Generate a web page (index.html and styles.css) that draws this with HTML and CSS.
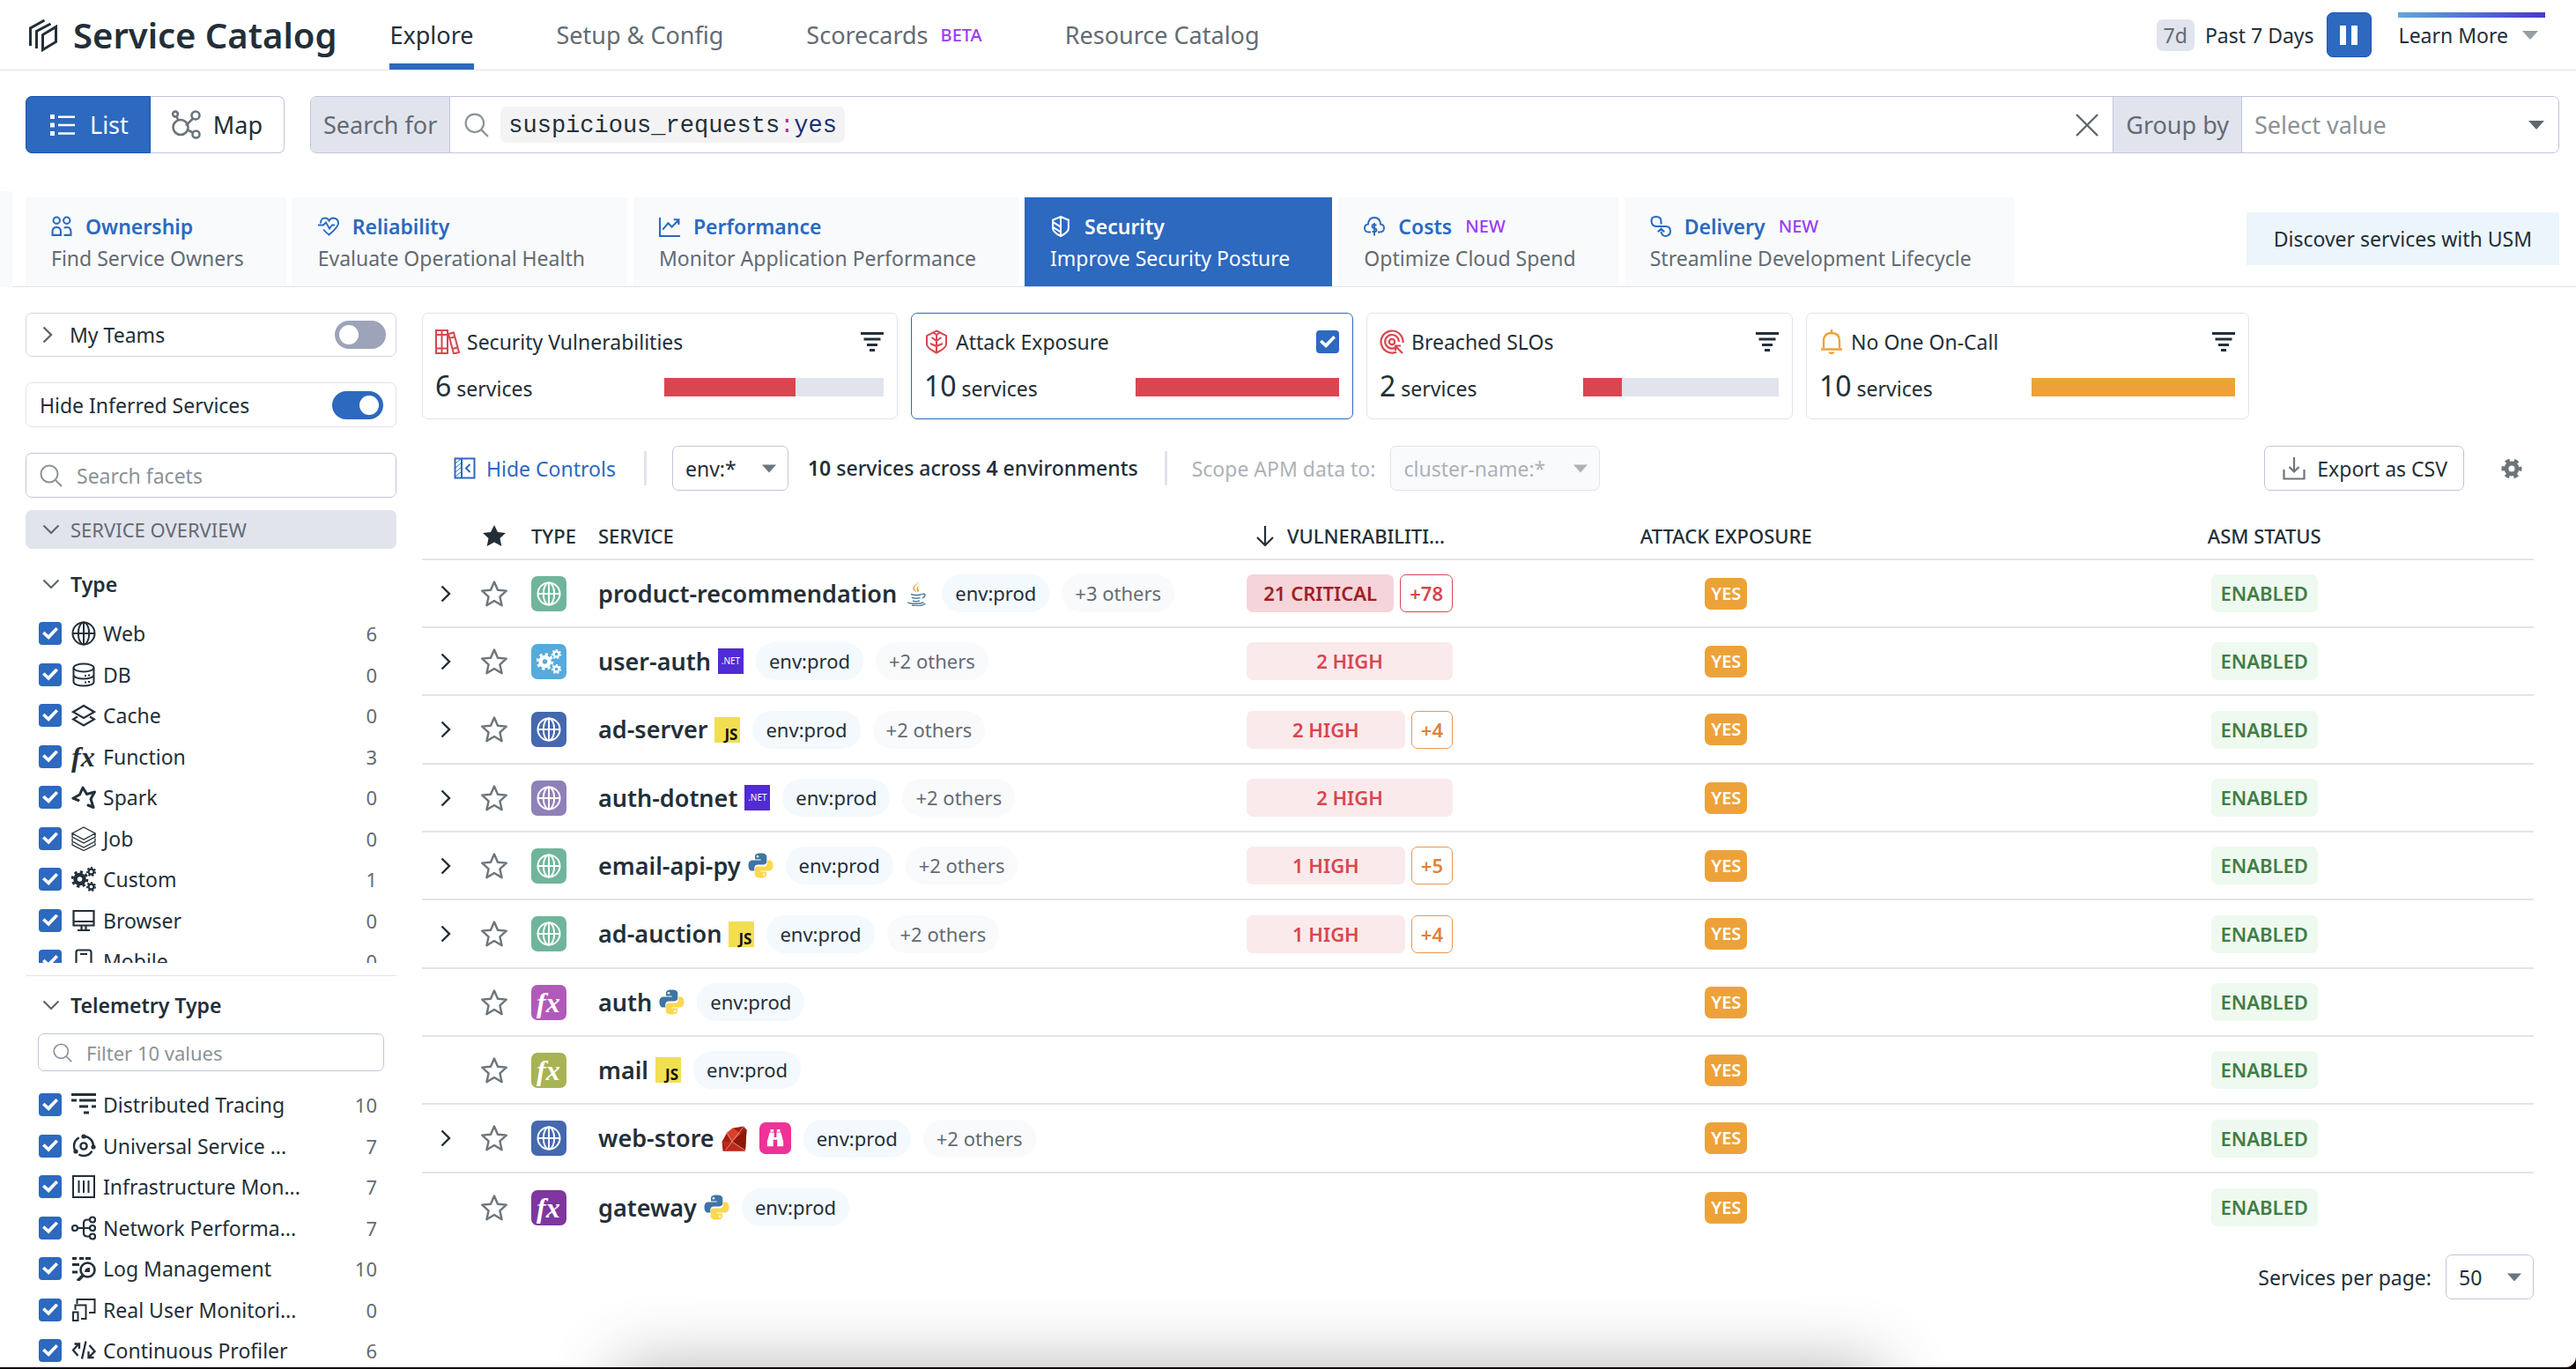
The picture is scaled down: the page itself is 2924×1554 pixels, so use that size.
FILE: index.html
```html
<!DOCTYPE html>
<html lang="en">
<head>
<meta charset="utf-8">
<title>Service Catalog</title>
<link rel="stylesheet" href="styles.css">
</head>
<body>
<svg class="sprite" aria-hidden="true">
  <symbol id="caret" viewBox="0 0 18 10"><path d="M0 0h18L9 10z" fill="currentColor"/></symbol>
  <symbol id="search" viewBox="0 0 26 26"><g fill="none" stroke="currentColor" stroke-width="2"><circle cx="11" cy="11" r="9.5"/><path d="M18 18l7 7"/></g></symbol>
  <symbol id="chev-r" viewBox="0 0 12 20"><path d="M1.500 1.500L10 10l-8.500 8.500" fill="none" stroke="currentColor" stroke-width="2.400"/></symbol>
  <symbol id="chev-d" viewBox="0 0 20 12"><path d="M1.500 1.500L10 10l8.500-8.500" fill="none" stroke="currentColor" stroke-width="2.200"/></symbol>
  <symbol id="globe" viewBox="0 0 28 28"><g fill="none" stroke="currentColor" stroke-width="2"><circle cx="14" cy="14" r="12.500"/><ellipse cx="14" cy="14" rx="6.200" ry="12.500"/><path d="M14 1.500v25M1.500 14h25"/></g></symbol>
  <symbol id="cogs" viewBox="0 0 28 28"><g fill="none" stroke="currentColor"><circle cx="9.500" cy="14" r="5" stroke-width="4.500"/><circle cx="9.500" cy="14" r="8.300" stroke-width="3" stroke-dasharray="3.260 3.260"/><circle cx="22.500" cy="5.500" r="3" stroke-width="2.300"/><circle cx="22.500" cy="5.500" r="4.700" stroke-width="1.700" stroke-dasharray="2.110 2.110"/><circle cx="22.500" cy="22.500" r="3" stroke-width="2.300"/><circle cx="22.500" cy="22.500" r="4.700" stroke-width="1.700" stroke-dasharray="2.110 2.110"/></g></symbol>
  <symbol id="star" viewBox="0 0 32 32"><path d="M16 2.500l4 9.200 9.800.9-7.400 6.700 2.200 9.900L16 24l-8.600 5.200 2.200-9.900-7.400-6.700 9.800-.9z" fill="none" stroke="currentColor" stroke-width="2.400" stroke-linejoin="round"/></symbol>
  <symbol id="filter" viewBox="0 0 26 22"><path d="M0 1.500h26M3.500 8h19M7 14.500h12M10 20.500h6" stroke="currentColor" stroke-width="2.800"/></symbol>
  <symbol id="python" viewBox="0 0 29 29"><path d="M14.300.5c-5 0-6.300 1.600-6.300 4v3h6.700v1H5C2.300 8.500.5 10.600.5 14.400c0 4 1.800 6 4.300 6h2.500v-3.300c0-2.200 1.800-3.700 4-3.700H18c1.900 0 3.300-1.600 3.300-3.400V4.500c0-2.500-2.200-4-7-4z" fill="#3f74a5"/><path d="M14.700 28.500c5 0 6.300-1.600 6.300-4v-3h-6.700v-1H24c2.700 0 4.500-2.100 4.500-5.900 0-4-1.800-6-4.300-6h-2.500v3.300c0 2.200-1.800 3.700-4 3.700H11c-1.900 0-3.300 1.600-3.300 3.400v5.500c0 2.500 2.200 4 7 4z" fill="#fcd752"/><circle cx="11" cy="4.200" r="1.300" fill="#fff"/><circle cx="18" cy="24.800" r="1.300" fill="#fff"/></symbol>
  <symbol id="java" viewBox="0 0 22 29"><path d="M12 0c2 4-6 6-4 9.500.6 1.500 2 2.500 2.500 4-2.500-1.500-5-3.500-4-6C8 4.500 13 3.500 12 0zM15.500 5c-3 1.500-4.500 3-3 5 1 1.500.5 2.500-1 3.800C12.500 12 10 11 10.500 9c.5-2 2.500-3.200 5-4z" fill="#e8952e"/><path d="M4 15.500c3 1.500 9 1.300 12 .2M5 19.300c3 1.200 7 1 9.500.2M6 23c2 .9 5.500.8 8 .1M1 24.500c-1.500 2 14 2.500 17.500.2M5 28c6 .9 13 .3 15.500-2M16.500 15.500c4-1.500 5 2 .5 4.300" fill="none" stroke="#5382a1" stroke-width="1.600"/></symbol>
  <symbol id="ruby" viewBox="0 0 29 29"><path d="M.5 18L6 8l7-5.500L25 .5l3.500 4L27 28.500 1.500 28.500z" fill="#a81c10"/><path d="M6 8l7-5.500L22 9 12 18z" fill="#d8402c"/><path d="M12 18l10-9 6.500-4.500L27 28z" fill="#8f170c"/><path d="M.5 18L5 27l7-9zM12 18l15 10.500H2z" fill="#bd2a1a"/><path d="M6 8l6 10L5 27M12 18L25 1M12 18l15 10" fill="none" stroke="#eb9b90" stroke-width=".9"/></symbol>
  <symbol id="bino" viewBox="0 0 24 24"><path d="M6 1h4v3H6zM14 1h4v3h-4zM5 5h5.500v6h3V5H19l3 11v6h-7.500v-8h-5v8H2v-6z" fill="#fff"/></symbol>
  <symbol id="db" viewBox="0 0 28 28"><g fill="none" stroke="currentColor" stroke-width="2"><ellipse cx="14" cy="6" rx="11.500" ry="4.500"/><path d="M2.500 6v16c0 6 23 6 23 0V6M2.500 14c0 6 23 6 23 0"/></g><path d="M15 14h2v2h-2zM19 13.500h2v2h-2zM15 21.500h2v2h-2zM19 21h2v2h-2z" fill="currentColor"/></symbol>
  <symbol id="cache" viewBox="0 0 28 28"><path d="M14 3l12 7.200L14 17 2 10.200zM7 15.500l-5 3L14 25.500l12-7-5-3" fill="none" stroke="currentColor" stroke-width="2.200"/></symbol>
  <symbol id="spark" viewBox="0 0 28 28"><path d="M8 17.500L1.800 15.200 9.500 11 13 3l4.500 7.500 9-2.500-4.500 8 3 9.500-6-2.500" fill="none" stroke="currentColor" stroke-width="3" stroke-linejoin="round" stroke-linecap="round"/></symbol>
  <symbol id="job" viewBox="0 0 28 28"><path d="M14 1l13 7-13 7L1 8zM1 8v4l13 7 13-7V8M1 13.500v3.500l13 7 13-7v-3.500M1 18.500v2.500l13 6.500 13-6.500v-2.500" fill="none" stroke="currentColor" stroke-width="1.300"/></symbol>
  <symbol id="browser" viewBox="0 0 28 28"><path d="M2.500 3h23v16.500h-23zM2.500 15h23M11.500 20v4M16.500 20v4M7 25h14" fill="none" stroke="currentColor" stroke-width="2.200"/></symbol>
  <symbol id="mobile" viewBox="0 0 28 28"><path d="M5.500 27V4q0-2.500 2.500-2.500h12q2.500 0 2.500 2.500v23zM10 6h8" fill="none" stroke="currentColor" stroke-width="2.200"/></symbol>
  <symbol id="tracing" viewBox="0 0 28 28"><path d="M0 2.500h28M0 9h6M9 9h19M9 16h10M23 16h5M14 23h6" fill="none" stroke="currentColor" stroke-width="3.200"/></symbol>
  <symbol id="usm" viewBox="0 0 28 28"><g fill="none" stroke="currentColor" stroke-width="2.400"><circle cx="14" cy="14" r="3.600"/><circle cx="14" cy="14" r="11" stroke-dasharray="17 6.040" stroke-dashoffset="-6"/></g><g fill="currentColor"><circle cx="14" cy="3" r="2.600"/><circle cx="25" cy="15" r="2.600"/><circle cx="5" cy="20" r="2.600"/></g></symbol>
  <symbol id="infra" viewBox="0 0 28 28"><path d="M2 2h24v24H2zM8.500 7v14M14 7v14M19.500 7v14" fill="none" stroke="currentColor" stroke-width="2"/></symbol>
  <symbol id="network" viewBox="0 0 28 28"><g fill="none" stroke="currentColor" stroke-width="2.200"><circle cx="4" cy="14" r="3"/><circle cx="24" cy="4.500" r="3"/><circle cx="24" cy="14" r="3"/><circle cx="24" cy="23.500" r="3"/><path d="M7 14h14M21 4.500h-3q-4 0-4 4v11q0 4 4 4h3"/></g></symbol>
  <symbol id="logs" viewBox="0 0 28 28"><g fill="none" stroke="currentColor"><path d="M1 2.500h5M9 2.500h5M16 2.500h6M1 9.500h8M1 18h6" stroke-width="3.200"/><circle cx="18.500" cy="15.500" r="8" stroke-width="2.600"/><path d="M13 22l-6 6" stroke-width="3.500"/></g><path d="M15 18q0-5 6-5v5z" fill="currentColor"/></symbol>
  <symbol id="rum" viewBox="0 0 28 28"><path d="M6.500 7V2h20v15H20M4.500 14V8.500h12V24H11M2 16.500h5.500V26H2z" fill="none" stroke="currentColor" stroke-width="2"/></symbol>
  <symbol id="profiler" viewBox="0 0 28 28"><path d="M7.500 20L2 13.500 9 6M3.500 6.500H9V12M16.500 3.500l-4.500 20M20.500 8l6 7-6.500 6.500M19.500 15v7h6" fill="none" stroke="currentColor" stroke-width="2.300"/></symbol>
</svg>

<div class="app">
<header class="topbar">
  <h1 class="brand">
    <svg class="brand-logo" viewBox="0 0 33 38"><g fill="none" stroke="currentColor" stroke-width="3"><path d="M18 2L2 11v20M25 6L9 14.500V34M16 18.500L31 9.500V26.500L16 35.500z"/></g></svg>
    Service Catalog
  </h1>
  <nav class="main-nav">
    <a class="nav-link is-current" href="#">Explore</a>
    <a class="nav-link" href="#">Setup &amp; Config</a>
    <a class="nav-link" href="#">Scorecards <span class="beta">BETA</span></a>
    <a class="nav-link" href="#">Resource Catalog</a>
  </nav>
  <div class="time">
    <span class="time-badge">7d</span>
    <span>Past 7 Days</span>
    <button class="pause" type="button" aria-label="Pause"><svg viewBox="0 0 20 22"><path d="M0 0h7v22H0zM13 0h7v22h-7z" fill="#fff"/></svg></button>
  </div>
  <button class="learn" type="button">Learn More <svg class="caret"><use href="#caret"/></svg></button>
</header>

<div class="query-row">
  <div class="mode">
    <button class="mode-btn is-on" type="button"><svg class="i-list" viewBox="0 0 28 24"><path d="M0 0h5v5H0zM0 9.500h5v5H0zM0 19h5v5H0zM9 1.500h19v2.500H9zM9 10.800h19v2.500H9zM9 20.200h19v2.500H9z" fill="currentColor"/></svg>List</button>
    <button class="mode-btn" type="button"><svg class="i-map" viewBox="0 0 33 33"><g fill="none" stroke="#6c757b" stroke-width="2.600"><circle cx="10" cy="19.500" r="8.500"/><circle cx="4" cy="4.500" r="2.900"/><circle cx="27" cy="6" r="4.500"/><circle cx="27.500" cy="27.500" r="4"/><path d="M5.500 7.500l2 4M24 9.500l-8 8M18 22.500l6 3"/></g></svg>Map</button>
  </div>
  <div class="query">
    <span class="query-tag">Search for</span>
    <div class="query-box">
      <svg class="i-search"><use href="#search"/></svg>
      <code class="token">suspicious_requests<span class="tk-sep">:</span><span class="tk-val">yes</span></code>
      <input class="query-input" type="text" aria-label="Search for services">
      <button class="clear" type="button" aria-label="Clear"><svg viewBox="0 0 26 26"><path d="M1 1l24 24M25 1L1 25" stroke="#5f676d" stroke-width="2.400"/></svg></button>
    </div>
    <label class="query-tag is-group" for="group">Group by</label>
    <div class="pick group-pick"><select id="group"><option>Select value</option></select><svg class="caret"><use href="#caret"/></svg></div>
  </div>
</div>

<div class="views">
  <div class="views-edge"></div>
  <div class="views-main">
    <nav class="view-tabs">
      <a class="view" href="#"><span class="view-title"><svg viewBox="0 0 23 23"><g fill="none" stroke="currentColor" stroke-width="2"><circle cx="6" cy="5" r="3.500"/><circle cx="17" cy="5" r="3.500"/><path d="M1.500 21v-4q0-4.500 4.500-4.500t4.500 4.500v4zM14 13q7.500-2 7.500 4v4H14"/></g></svg>Ownership</span><span class="view-sub">Find Service Owners</span></a>
      <a class="view" href="#"><span class="view-title"><svg viewBox="0 0 24 23"><path d="M3 8Q3 2 8 2q3 0 4.500 3Q14 2 17.500 2 23 2.500 23 8q0 4-10.500 13Q9 18.500 6 15M0 10h6l3-3 4 7 3-4h3" fill="none" stroke="currentColor" stroke-width="1.900"/></svg>Reliability</span><span class="view-sub">Evaluate Operational Health</span></a>
      <a class="view" href="#"><span class="view-title"><svg viewBox="0 0 23 23"><path d="M1 2v20h22M4 15l6-7 4 4 7-7M16 4h5.500v5.500" fill="none" stroke="currentColor" stroke-width="2"/></svg>Performance</span><span class="view-sub">Monitor Application Performance</span></a>
      <a class="view is-on" href="#"><span class="view-title"><svg viewBox="0 0 23 23"><path d="M11.500 1L20 4.500v9q0 4.500-8.500 8.500Q3 18 3 13.500v-9zM11.500 1v21M3.500 7l8 5M3.500 12.500l8 5" fill="none" stroke="currentColor" stroke-width="2"/></svg>Security</span><span class="view-sub">Improve Security Posture</span></a>
      <a class="view" href="#"><span class="view-title"><svg viewBox="0 0 24 23"><path d="M8 18H6q-5 0-5-4.500 0-4 4-4.500Q5.500 1.500 12 1.500T19 9q4 .5 4 4.500 0 4.500-5 4.500h-2M14.500 10q-5-1.500-5 1t2.500 2.500q2.500.5 2.500 2.500t-5 1.500M12 7.500V22" fill="none" stroke="currentColor" stroke-width="1.900"/></svg>Costs <span class="new">NEW</span></span><span class="view-sub">Optimize Cloud Spend</span></a>
      <a class="view" href="#"><span class="view-title"><svg viewBox="0 0 23 23"><path d="M12 6q0-5-5.500-5T1.500 6t5 5.500H17q5 0 5 5T17 22q-4.500 0-5-5M8.500 17.500L12 14l3.500 3.500M12 6v3" fill="none" stroke="currentColor" stroke-width="2"/></svg>Delivery <span class="new">NEW</span></span><span class="view-sub">Streamline Development Lifecycle</span></a>
    </nav>
    <button class="discover" type="button">Discover services with USM</button>
  </div>
</div>

<div class="layout">
<aside class="facets">
  <div class="panel is-teams"><svg class="i-cr"><use href="#chev-r"/></svg><label for="teams">My Teams</label><input class="toggle" id="teams" type="checkbox"></div>
  <div class="panel"><label for="inferred">Hide Inferred Services</label><input class="toggle" id="inferred" type="checkbox" checked></div>
  <div class="field"><svg class="i-fs"><use href="#search"/></svg><input type="text" placeholder="Search facets" aria-label="Search facets"></div>
  <button class="group-bar" type="button"><svg class="i-cd"><use href="#chev-d"/></svg>SERVICE OVERVIEW</button>

  <section class="facet">
    <h2 class="facet-title"><svg class="i-cd"><use href="#chev-d"/></svg>Type</h2>
    <ul class="facet-list is-scroll">
      <li><label><input type="checkbox" checked><svg><use href="#globe"/></svg>Web</label><span>6</span></li>
      <li><label><input type="checkbox" checked><svg><use href="#db"/></svg>DB</label><span>0</span></li>
      <li><label><input type="checkbox" checked><svg><use href="#cache"/></svg>Cache</label><span>0</span></li>
      <li><label><input type="checkbox" checked><i class="fx">fx</i>Function</label><span>3</span></li>
      <li><label><input type="checkbox" checked><svg><use href="#spark"/></svg>Spark</label><span>0</span></li>
      <li><label><input type="checkbox" checked><svg><use href="#job"/></svg>Job</label><span>0</span></li>
      <li><label><input type="checkbox" checked><svg><use href="#cogs"/></svg>Custom</label><span>1</span></li>
      <li><label><input type="checkbox" checked><svg><use href="#browser"/></svg>Browser</label><span>0</span></li>
      <li><label><input type="checkbox" checked><svg><use href="#mobile"/></svg>Mobile</label><span>0</span></li>
    </ul>
  </section>
  <section class="facet">
    <h2 class="facet-title"><svg class="i-cd"><use href="#chev-d"/></svg>Telemetry Type</h2>
    <div class="field is-small"><svg class="i-fs"><use href="#search"/></svg><input type="text" placeholder="Filter 10 values" aria-label="Filter 10 values"></div>
    <ul class="facet-list">
      <li><label><input type="checkbox" checked><svg><use href="#tracing"/></svg>Distributed Tracing</label><span>10</span></li>
      <li><label><input type="checkbox" checked><svg><use href="#usm"/></svg>Universal Service ...</label><span>7</span></li>
      <li><label><input type="checkbox" checked><svg><use href="#infra"/></svg>Infrastructure Mon...</label><span>7</span></li>
      <li><label><input type="checkbox" checked><svg><use href="#network"/></svg>Network Performa...</label><span>7</span></li>
      <li><label><input type="checkbox" checked><svg><use href="#logs"/></svg>Log Management</label><span>10</span></li>
      <li><label><input type="checkbox" checked><svg><use href="#rum"/></svg>Real User Monitori...</label><span>0</span></li>
      <li><label><input type="checkbox" checked><svg><use href="#profiler"/></svg>Continuous Profiler</label><span>6</span></li>
    </ul>
  </section>
</aside>

<main class="content">
  <div class="cards">
    <article class="card">
      <div class="card-head"><svg class="card-icon red" viewBox="0 0 28 28"><g fill="none" stroke="currentColor" stroke-width="2"><path d="M1 1h6.500v26H1zM7.500 1H14v26H7.500zM1 6h13M1 21.500h13M15 5l6-1.500L27 26l-6 1.500zM16 10l6-1.500M19.500 22l6-1.500"/></g></svg><h3>Security Vulnerabilities</h3><button class="icon-btn" type="button" aria-label="Filter"><svg class="i-filter"><use href="#filter"/></svg></button></div>
      <div class="card-body"><p><b>6</b> services</p><div class="bar"><div class="bar-fill" style="width:60%"></div></div></div>
    </article>
    <article class="card is-on">
      <div class="card-head"><svg class="card-icon red" viewBox="0 0 28 28"><path d="M14 1.500l11 5.500v10q0 4-11 9.500Q3 21 3 17V7zM14 6v19M14 13L8.500 9M14 13l5.500-4M14 19l-7-3M14 19l7-3M14 6l-3-2M14 6l3-2" fill="none" stroke="currentColor" stroke-width="2"/></svg><h3>Attack Exposure</h3><input type="checkbox" aria-label="Attack Exposure" checked></div>
      <div class="card-body"><p><b>10</b> services</p><div class="bar"><div class="bar-fill" style="width:100%"></div></div></div>
    </article>
    <article class="card">
      <div class="card-head"><svg class="card-icon red" viewBox="0 0 28 28"><g fill="none" stroke="currentColor" stroke-width="2.200"><path d="M19 25.500A12.500 12.500 0 1 1 26.500 15M18 20.500A7.800 7.800 0 1 1 21.800 14"/><circle cx="14" cy="14" r="3.200"/><path d="M26 27l-8-8M18 24v-5.500h6"/></g></svg><h3>Breached SLOs</h3><button class="icon-btn" type="button" aria-label="Filter"><svg class="i-filter"><use href="#filter"/></svg></button></div>
      <div class="card-body"><p><b>2</b> services</p><div class="bar"><div class="bar-fill" style="width:20%"></div></div></div>
    </article>
    <article class="card">
      <div class="card-head"><svg class="card-icon amber" viewBox="0 0 28 28"><path d="M14 0v4M5 21v-8q0-9 9-9t9 9v8M2 22.500h24" fill="none" stroke="currentColor" stroke-width="2.400"/><path d="M10.500 25.500h7Q17 28 14 28t-3.500-2.500z" fill="currentColor"/></svg><h3>No One On-Call</h3><button class="icon-btn" type="button" aria-label="Filter"><svg class="i-filter"><use href="#filter"/></svg></button></div>
      <div class="card-body"><p><b>10</b> services</p><div class="bar"><div class="bar-fill is-amber" style="width:100%"></div></div></div>
    </article>
  </div>

  <div class="controls">
    <button class="hide-controls" type="button"><svg viewBox="0 0 25 25"><path d="M1.500 1.500h22v22h-22zM9 2v21M18.500 8l-4.500 4.500 4.500 4.500" fill="none" stroke="currentColor" stroke-width="2"/><path d="M2 7l6-5M2 12l7-6M2 17l7-6M2 22l7-6" stroke="currentColor" stroke-width="1"/></svg>Hide Controls</button>
    <div class="pick env-pick"><select aria-label="Environment"><option>env:*</option></select><svg class="caret"><use href="#caret"/></svg></div>
    <p class="summary"><b>10</b> services across <b>4</b> environments</p>
    <label class="scope" for="scope">Scope APM data to:</label>
    <div class="pick scope-pick"><select id="scope" disabled><option>cluster-name:*</option></select><svg class="caret"><use href="#caret"/></svg></div>
    <button class="export" type="button"><svg viewBox="0 0 26 26"><path d="M1.500 14v10.500h23V14M13 0v16M7.500 11l5.500 5.500 5.500-5.500" fill="none" stroke="#6c757b" stroke-width="2.200"/></svg>Export as CSV</button>
    <button class="icon-btn gear" type="button" aria-label="Settings"><svg viewBox="0 0 24 24"><g fill="none" stroke="#6c757b"><circle cx="12" cy="12" r="6" stroke-width="5"/><circle cx="12" cy="12" r="9.500" stroke-width="4" stroke-dasharray="5 4.950" stroke-dashoffset="2.500"/></g></svg></button>
  </div>

  <table class="services">
    <colgroup><col class="c-exp"><col class="c-star"><col class="c-type"><col class="c-name"><col class="c-vuln"><col><col></colgroup>
    <thead><tr>
      <th></th>
      <th><svg class="i-star-solid" viewBox="0 0 26 24"><path d="M13 0l4 8 9 1-6.500 6 1.800 9L13 19.500 4.700 24l1.800-9L0 9l9-1z" fill="currentColor"/></svg></th>
      <th class="t-type">TYPE</th>
      <th class="t-left">SERVICE</th>
      <th class="t-vuln"><svg viewBox="0 0 22 24"><path d="M11 0v22M2 13l9 9 9-9" fill="none" stroke="currentColor" stroke-width="2.200"/></svg>VULNERABILITI...</th>
      <th>ATTACK EXPOSURE</th>
      <th>ASM STATUS</th>
    </tr></thead>
    <tbody>
      <tr>
        <td><button class="icon-btn" type="button" aria-label="Expand"><svg class="i-cr"><use href="#chev-r"/></svg></button></td>
        <td><button class="icon-btn" type="button" aria-label="Favorite"><svg class="i-star"><use href="#star"/></svg></button></td>
        <td class="t-type"><span class="kind k-green"><svg><use href="#globe"/></svg></span></td>
        <td class="t-left"><div class="svc"><a class="name" href="#">product-recommendation</a><svg class="lang is-java"><use href="#java"/></svg><span class="pill">env:prod</span><span class="pill more">+3 others</span></div></td>
        <td><div class="vulns"><span class="sev critical">21 CRITICAL</span><span class="plus red">+78</span></div></td>
        <td><span class="yes">YES</span></td>
        <td><span class="enabled">ENABLED</span></td>
      </tr>
      <tr>
        <td><button class="icon-btn" type="button" aria-label="Expand"><svg class="i-cr"><use href="#chev-r"/></svg></button></td>
        <td><button class="icon-btn" type="button" aria-label="Favorite"><svg class="i-star"><use href="#star"/></svg></button></td>
        <td class="t-type"><span class="kind k-sky"><svg><use href="#cogs"/></svg></span></td>
        <td class="t-left"><div class="svc"><a class="name" href="#">user-auth</a><span class="lang is-net">.NET</span><span class="pill">env:prod</span><span class="pill more">+2 others</span></div></td>
        <td><div class="vulns"><span class="sev">2 HIGH</span></div></td>
        <td><span class="yes">YES</span></td>
        <td><span class="enabled">ENABLED</span></td>
      </tr>
      <tr>
        <td><button class="icon-btn" type="button" aria-label="Expand"><svg class="i-cr"><use href="#chev-r"/></svg></button></td>
        <td><button class="icon-btn" type="button" aria-label="Favorite"><svg class="i-star"><use href="#star"/></svg></button></td>
        <td class="t-type"><span class="kind k-blue"><svg><use href="#globe"/></svg></span></td>
        <td class="t-left"><div class="svc"><a class="name" href="#">ad-server</a><span class="lang is-js">JS</span><span class="pill">env:prod</span><span class="pill more">+2 others</span></div></td>
        <td><div class="vulns"><span class="sev">2 HIGH</span><span class="plus">+4</span></div></td>
        <td><span class="yes">YES</span></td>
        <td><span class="enabled">ENABLED</span></td>
      </tr>
      <tr>
        <td><button class="icon-btn" type="button" aria-label="Expand"><svg class="i-cr"><use href="#chev-r"/></svg></button></td>
        <td><button class="icon-btn" type="button" aria-label="Favorite"><svg class="i-star"><use href="#star"/></svg></button></td>
        <td class="t-type"><span class="kind k-violet"><svg><use href="#globe"/></svg></span></td>
        <td class="t-left"><div class="svc"><a class="name" href="#">auth-dotnet</a><span class="lang is-net">.NET</span><span class="pill">env:prod</span><span class="pill more">+2 others</span></div></td>
        <td><div class="vulns"><span class="sev">2 HIGH</span></div></td>
        <td><span class="yes">YES</span></td>
        <td><span class="enabled">ENABLED</span></td>
      </tr>
      <tr>
        <td><button class="icon-btn" type="button" aria-label="Expand"><svg class="i-cr"><use href="#chev-r"/></svg></button></td>
        <td><button class="icon-btn" type="button" aria-label="Favorite"><svg class="i-star"><use href="#star"/></svg></button></td>
        <td class="t-type"><span class="kind k-green"><svg><use href="#globe"/></svg></span></td>
        <td class="t-left"><div class="svc"><a class="name" href="#">email-api-py</a><svg class="lang"><use href="#python"/></svg><span class="pill">env:prod</span><span class="pill more">+2 others</span></div></td>
        <td><div class="vulns"><span class="sev">1 HIGH</span><span class="plus">+5</span></div></td>
        <td><span class="yes">YES</span></td>
        <td><span class="enabled">ENABLED</span></td>
      </tr>
      <tr>
        <td><button class="icon-btn" type="button" aria-label="Expand"><svg class="i-cr"><use href="#chev-r"/></svg></button></td>
        <td><button class="icon-btn" type="button" aria-label="Favorite"><svg class="i-star"><use href="#star"/></svg></button></td>
        <td class="t-type"><span class="kind k-green"><svg><use href="#globe"/></svg></span></td>
        <td class="t-left"><div class="svc"><a class="name" href="#">ad-auction</a><span class="lang is-js">JS</span><span class="pill">env:prod</span><span class="pill more">+2 others</span></div></td>
        <td><div class="vulns"><span class="sev">1 HIGH</span><span class="plus">+4</span></div></td>
        <td><span class="yes">YES</span></td>
        <td><span class="enabled">ENABLED</span></td>
      </tr>
      <tr>
        <td></td>
        <td><button class="icon-btn" type="button" aria-label="Favorite"><svg class="i-star"><use href="#star"/></svg></button></td>
        <td class="t-type"><span class="kind k-orchid"><i class="fx">fx</i></span></td>
        <td class="t-left"><div class="svc"><a class="name" href="#">auth</a><svg class="lang"><use href="#python"/></svg><span class="pill">env:prod</span></div></td>
        <td></td>
        <td><span class="yes">YES</span></td>
        <td><span class="enabled">ENABLED</span></td>
      </tr>
      <tr>
        <td></td>
        <td><button class="icon-btn" type="button" aria-label="Favorite"><svg class="i-star"><use href="#star"/></svg></button></td>
        <td class="t-type"><span class="kind k-olive"><i class="fx">fx</i></span></td>
        <td class="t-left"><div class="svc"><a class="name" href="#">mail</a><span class="lang is-js">JS</span><span class="pill">env:prod</span></div></td>
        <td></td>
        <td><span class="yes">YES</span></td>
        <td><span class="enabled">ENABLED</span></td>
      </tr>
      <tr>
        <td><button class="icon-btn" type="button" aria-label="Expand"><svg class="i-cr"><use href="#chev-r"/></svg></button></td>
        <td><button class="icon-btn" type="button" aria-label="Favorite"><svg class="i-star"><use href="#star"/></svg></button></td>
        <td class="t-type"><span class="kind k-blue"><svg><use href="#globe"/></svg></span></td>
        <td class="t-left"><div class="svc"><a class="name" href="#">web-store</a><svg class="lang"><use href="#ruby"/></svg><span class="rum-badge"><svg><use href="#bino"/></svg></span><span class="pill">env:prod</span><span class="pill more">+2 others</span></div></td>
        <td></td>
        <td><span class="yes">YES</span></td>
        <td><span class="enabled">ENABLED</span></td>
      </tr>
      <tr>
        <td></td>
        <td><button class="icon-btn" type="button" aria-label="Favorite"><svg class="i-star"><use href="#star"/></svg></button></td>
        <td class="t-type"><span class="kind k-purple"><i class="fx">fx</i></span></td>
        <td class="t-left"><div class="svc"><a class="name" href="#">gateway</a><svg class="lang"><use href="#python"/></svg><span class="pill">env:prod</span></div></td>
        <td></td>
        <td><span class="yes">YES</span></td>
        <td><span class="enabled">ENABLED</span></td>
      </tr>
    </tbody>
  </table>

  <div class="pager">
    <label for="per-page">Services per page:</label>
    <div class="pick page-pick"><select id="per-page"><option>50</option></select><svg class="caret"><use href="#caret"/></svg></div>
  </div>
</main>
</div>
<div class="dock-shadow"></div>
</div>
</body>
</html>
```
FILE: styles.css
```css
:root {
  --ink: #232f38;
  --muted: #636b72;
  --faint: #8c9297;
  --blue: #2c69bf;
  --line: #e2e4ec;
  --edge: #c2c5da;
  --fill: #e1e4ed;
  --red: #d9464f;
  --amber: #eda239;
  --purple: #9a3cf7;
}

* { box-sizing: border-box; }

html { background: #120607; }

body {
  margin: 0;
  font-family: "Noto Sans", "Open Sans", sans-serif;
  font-size: 23px;
  line-height: 36px;
  color: var(--ink);
}

h1, h2, h3, p, ul { margin: 0; padding: 0; font-size: inherit; }
ul { list-style: none; }
a { color: inherit; text-decoration: none; }
svg { display: block; flex: none; }
button, input, select { font: inherit; color: inherit; margin: 0; }
button { background: none; border: 0; padding: 0; cursor: pointer; }

.sprite { position: absolute; width: 0; height: 0; }

.app {
  position: relative;
  display: flex;
  flex-direction: column;
  height: calc(100vh - 2px);
  overflow: hidden;
  background: #fff;
  border-bottom-right-radius: 12px;
}

.caret { width: 18px; height: 10px; color: #5f676d; }

/* Top bar */
.topbar {
  display: flex;
  align-items: center;
  flex: none;
  height: 80px;
  padding: 0 35px 0 32px;
  border-bottom: 1px solid var(--line);
}
.brand {
  display: flex;
  align-items: center;
  gap: 17px;
  font-size: 40px;
  font-weight: 600;
  line-height: 56px;
}
.brand-logo { width: 34px; height: 38px; }
.main-nav {
  display: flex;
  gap: 94px;
  margin-left: 60px;
  font-size: 27px;
}
.nav-link {
  display: flex;
  align-items: center;
  gap: 14px;
  height: 79px;
  color: var(--muted);
}
.nav-link.is-current { color: var(--ink); box-shadow: inset 0 -7px var(--blue); }
.beta, .new { color: var(--purple); font-size: 20px; font-weight: 500; }
.time {
  display: flex;
  align-items: center;
  gap: 12px;
  margin-left: auto;
}
.time-badge {
  padding: 0 8px;
  color: var(--muted);
  background: var(--fill);
  border-radius: 7px;
}
.pause {
  display: grid;
  place-items: center;
  width: 51px;
  height: 51px;
  margin-left: 2px;
  background: var(--blue);
  border: 1px solid #1f51b4;
  border-radius: 7px;
}
.pause svg { width: 20px; height: 22px; }
.learn {
  display: flex;
  align-items: center;
  gap: 16px;
  height: 51px;
  margin-left: 30px;
  padding: 0 8px 0 1px;
  background: linear-gradient(90deg, #5fa8d8, #4a38c8) top / 100% 6px no-repeat;
}
.learn .caret { color: #989da2; }

/* Search row */
.query-row {
  display: flex;
  flex: none;
  gap: 29px;
  height: 65px;
  margin: 29px 19px 43px 29px;
  font-size: 27px;
}
.mode { display: flex; }
.mode-btn {
  display: flex;
  align-items: center;
  gap: 14px;
  padding: 0 24px;
  border: 1px solid var(--edge);
  border-left: 0;
  border-radius: 0 7px 7px 0;
}
.mode-btn.is-on {
  gap: 17px;
  padding: 0 24px 0 27px;
  color: #fff;
  background: var(--blue);
  border: 1px solid #1f51b4;
  border-radius: 7px 0 0 7px;
}
.i-list { width: 28px; height: 24px; }
.i-map { width: 33px; height: 33px; }
.query {
  display: flex;
  flex: 1;
  min-width: 0;
  border: 1px solid var(--edge);
  border-radius: 7px;
  overflow: hidden;
}
.query-tag {
  display: flex;
  align-items: center;
  padding: 0 14px;
  color: var(--muted);
  background: var(--fill);
  border-right: 1px solid var(--edge);
}
.query-tag.is-group { border-left: 1px solid var(--edge); }
.query-box {
  display: flex;
  align-items: center;
  flex: 1;
  min-width: 0;
  padding: 0 16px;
}
.i-search { width: 28px; height: 28px; color: var(--faint); }
.token {
  margin-left: 13px;
  padding: 3px 9px 0;
  font-family: "Liberation Mono", monospace;
  font-size: 27px;
  line-height: 38px;
  background: #f3f3f4;
  border-radius: 7px;
}
.tk-sep { color: #b5329e; }
.tk-val { color: #1c2f70; }
.query-input {
  flex: 1;
  min-width: 0;
  border: 0;
  outline: 0;
  background: none;
}
.clear svg { width: 26px; height: 26px; }

/* Drop-downs */
.pick { display: grid; align-items: center; }
.pick select, .pick .caret { grid-area: 1 / 1; }
.pick .caret { justify-self: end; margin-right: 14px; pointer-events: none; }
.pick select {
  appearance: none;
  width: 100%;
  height: 51px;
  padding: 0 14px;
  background: #fff;
  border: 1px solid var(--edge);
  border-radius: 7px;
}
.group-pick { width: 359px; }
.group-pick select { height: 63px; border: 0; color: var(--faint); }
.group-pick .caret { margin-right: 16px; }
.env-pick { width: 132px; }
.env-pick .caret, .scope-pick .caret, .page-pick .caret { width: 16px; color: #6c757b; }
.scope-pick { width: 238px; }
.scope-pick select { color: #adb2b6; background: #f9fafc; border-color: var(--line); opacity: 1; }
.scope-pick .caret { color: #adb2b6; }
.page-pick { width: 100px; }

/* View tabs */
.views { display: flex; flex: none; height: 109px; }
.views-edge { width: 14px; background: #f8fafc; }
.views-main {
  display: flex;
  align-items: flex-end;
  justify-content: space-between;
  flex: 1;
  padding: 0 19px 0 15px;
  border-bottom: 1px solid var(--line);
}
.view-tabs { display: flex; gap: 7px; }
.view {
  display: flex;
  flex-direction: column;
  padding: 15px 48px 14px 29px;
  background: #f8fafc;
}
.view-title {
  display: flex;
  align-items: center;
  gap: 15px;
  font-weight: 600;
  color: var(--blue);
}
.view-title svg { width: 24px; height: 24px; }
.view-sub { color: var(--muted); }
.view.is-on, .view.is-on .view-title, .view.is-on .view-sub { color: #fff; background: var(--blue); }
.discover {
  height: 60px;
  margin-bottom: 24px;
  padding: 0 31px;
  background: #edf5fc;
}

/* Page body */
.layout {
  display: flex;
  gap: 29px;
  flex: 1;
  min-height: 0;
  padding: 29px 48px 0 29px;
}

/* Facets */
.facets { flex: none; width: 421px; }
.panel {
  display: flex;
  align-items: center;
  height: 51px;
  margin-bottom: 29px;
  padding: 0 14px 0 15px;
  border: 1px solid var(--line);
  border-radius: 7px;
}
.panel.is-teams { height: 50px; padding: 0 11px 0 18px; border-color: #d4d6e4; }
.panel label { flex: 1; }
.i-cr { width: 12px; height: 20px; color: #5f676d; }
.i-cd { width: 20px; height: 12px; color: #5f676d; }
.is-teams .i-cr { margin-right: 19px; }
.toggle {
  appearance: none;
  display: flex;
  width: 58px;
  height: 32px;
  padding: 5px;
  background: #9da3b8;
  border-radius: 16px;
}
.toggle::before {
  content: "";
  width: 22px;
  height: 22px;
  background: #fff;
  border-radius: 50%;
}
.toggle:checked { justify-content: flex-end; background: var(--blue); }
.field {
  display: flex;
  align-items: center;
  gap: 16px;
  height: 51px;
  padding: 0 15px;
  border: 1px solid var(--edge);
  border-radius: 7px;
}
.field input {
  flex: 1;
  min-width: 0;
  padding: 0;
  border: 0;
  outline: 0;
  background: none;
}
.field input::placeholder { color: var(--faint); opacity: 1; }
.i-fs { width: 26px; height: 26px; color: var(--faint); }
.field.is-small {
  height: 43px;
  margin: 9px 14px 15px;
  padding: 0 16px;
  font-size: 22px;
}
.is-small .i-fs { width: 22px; height: 22px; }
.group-bar {
  display: flex;
  align-items: center;
  gap: 12px;
  width: 100%;
  height: 44px;
  margin-top: 14px;
  padding: 0 19px;
  font-size: 22px;
  color: var(--muted);
  background: var(--fill);
  border-radius: 7px;
}
.facet + .facet { margin-top: 14px; border-top: 1px solid var(--line); }
.facet-title {
  display: flex;
  align-items: center;
  gap: 12px;
  height: 46px;
  margin-top: 17px;
  padding-left: 19px;
  font-weight: 600;
}
.facet + .facet .facet-title { margin-top: 10px; }
.facet-list.is-scroll { height: 397px; margin-top: 10px; overflow: hidden; }
.facet-list li {
  display: flex;
  align-items: center;
  height: 46px;
  padding: 0 22px 0 15px;
}
.facet-list li:nth-child(even) { height: 47px; }
.facet-list label { display: flex; align-items: center; flex: 1; }
.facet-list svg, .facet-list .fx { margin: 0 8px 0 11px; }
.facet-list svg { width: 28px; height: 28px; }
.facet-list span { font-size: 22px; color: var(--muted); }
.fx {
  width: 28px;
  font-family: "Liberation Serif", serif;
  font-size: 32px;
  font-weight: 700;
  font-style: italic;
  line-height: 28px;
}

.facet-list input, .card input {
  appearance: none;
  display: grid;
  place-items: center;
  width: 26px;
  height: 26px;
  background: var(--blue);
  border-radius: 4px;
}
.facet-list input::before, .card input::before {
  content: "";
  width: 18px;
  height: 14px;
  background: #fff;
  clip-path: polygon(0 52%, 14% 34%, 38% 62%, 86% 0, 100% 18%, 40% 100%);
}

/* Cards */
.content { flex: 1; min-width: 0; }
.cards {
  display: grid;
  grid-template-columns: minmax(0, 540px) minmax(0, 502px) minmax(0, 484px) minmax(0, 503px);
  gap: 15px;
}
.card {
  display: flex;
  flex-direction: column;
  gap: 11px;
  padding: 12px 15px 16px 14px;
  border: 1px solid var(--line);
  border-radius: 7px;
}
.card.is-on { border-color: var(--blue); }
.card-head { display: flex; align-items: center; gap: 8px; height: 40px; }
.card-head h3 { flex: 1; font-weight: 400; }
.card-icon { width: 28px; height: 28px; }
.red { color: var(--red); }
.amber { color: var(--amber); }
.i-filter { width: 26px; height: 22px; }
.card-body { display: flex; align-items: center; justify-content: space-between; height: 40px; }
.card-body b { font-size: 32px; font-weight: 400; }
.bar { width: 49%; height: 21px; background: var(--fill); }
.bar-fill { height: 100%; background: var(--red); }
.bar-fill.is-amber { background: var(--amber); }

/* Controls */
.controls {
  display: flex;
  align-items: center;
  margin-top: 30px;
  padding-left: 36px;
}
.hide-controls {
  display: flex;
  align-items: center;
  gap: 12px;
  height: 39px;
  margin-right: 29px;
  padding-right: 32px;
  color: var(--blue);
  border-right: 3px solid var(--fill);
}
.hide-controls svg { width: 25px; height: 25px; }
.summary {
  margin: 0 28px 0 22px;
  padding-right: 30px;
  font-weight: 500;
  line-height: 39px;
  border-right: 3px solid var(--fill);
}
.summary b { font-weight: 600; }
.scope { margin-right: 17px; color: #adb2b6; }
.export {
  display: flex;
  align-items: center;
  gap: 13px;
  height: 51px;
  margin-left: auto;
  padding: 0 18px 0 20px;
  border: 1px solid var(--edge);
  border-radius: 7px;
}
.export svg { width: 26px; height: 26px; }
.gear { margin: 0 13px 0 42px; }
.gear svg { width: 24px; height: 24px; }

/* Services table */
.services {
  width: 100%;
  margin-top: 24px;
  table-layout: fixed;
  border-collapse: separate;
  border-spacing: 0;
  font-size: 22px;
}
.c-exp { width: 50px; }
.c-star { width: 64px; }
.c-type { width: 76px; }
.c-name { width: 736px; }
.c-vuln { width: 254px; }
.services th, .services td { padding: 0 8px 0 0; text-align: center; }
.services th { height: 55px; font-weight: 500; border-bottom: 2px solid var(--line); }
.services td { height: 77px; border-bottom: 2px solid var(--line); }
.services tr:nth-child(3n) td { height: 78px; }
.services tr:last-child td { border-bottom: 0; }
.services th:last-child, .services td:last-child { padding-right: 3px; }
.services th:nth-child(-n+2), .services td:nth-child(-n+2) { padding: 0; }
.services td:first-child { padding-left: 3px; }
.services .t-type, .services .t-left { padding-left: 10px; padding-right: 0; text-align: left; }
.services td:nth-child(5) { padding: 0 10px; }
.services .t-vuln { padding: 0 10px 0 20px; text-align: left; white-space: nowrap; }
.t-vuln svg { display: inline-block; width: 22px; height: 24px; margin-right: 14px; vertical-align: -4px; }
.i-star-solid { width: 26px; height: 24px; margin: 0 auto; }
.i-star { width: 32px; height: 32px; color: #6c757b; }
.services .i-cr { color: var(--ink); }
.services .icon-btn { display: block; margin: 0 auto; }
.kind {
  display: grid;
  place-items: center;
  width: 40px;
  height: 40px;
  color: #fff;
  border-radius: 7px;
}
.kind svg { width: 28px; height: 28px; }
.k-green { background: #70b59b; }
.k-sky { background: #55abdb; }
.k-blue { background: #4568af; }
.k-violet { background: #8f80b8; }
.k-orchid { background: #b05ab9; }
.k-olive { background: #a8b353; }
.k-purple { background: #7f369f; }
.svc { display: flex; align-items: center; }
.name { font-size: 27px; font-weight: 600; white-space: nowrap; }
.lang { width: 29px; height: 29px; margin: 0 14px 0 8px; }
.lang.is-java { width: 22px; margin: 0 17px 0 12px; }
.lang.is-net {
  font-size: 10px;
  line-height: 29px;
  text-align: center;
  color: #fff;
  background: #512bd4;
}
.lang.is-js {
  padding: 10px 3px 0 0;
  font-size: 17px;
  font-weight: 700;
  line-height: 19px;
  text-align: right;
  color: #111;
  background: #f1df51;
}
.rum-badge {
  display: grid;
  place-items: center;
  width: 36px;
  height: 36px;
  margin-right: 14px;
  background: #ee3297;
  border-radius: 7px;
}
.rum-badge svg { width: 22px; height: 22px; }
.pill {
  margin-right: 14px;
  padding: 0 15px;
  line-height: 43px;
  background: #f3f9fd;
  border-radius: 22px;
}
.pill.more { color: var(--muted); background: #f9fafc; }
.vulns { display: flex; gap: 7px; line-height: 43px; font-weight: 600; }
.sev {
  flex: 1;
  color: var(--red);
  background: #faeaeb;
  border-radius: 7px;
}
.sev.critical { color: #a02024; background: #f5d5d9; }
.plus {
  padding: 0 10px;
  line-height: 41px;
  color: #e08238;
  border: 1px solid #e8974f;
  border-radius: 7px;
}
.plus.red { color: var(--red); border-color: var(--red); }
.yes, .enabled { display: block; width: fit-content; margin: 0 auto; border-radius: 7px; font-weight: 600; }
.yes { padding: 0 7px; font-size: 20px; line-height: 36px; color: #fff; background: var(--amber); }
.enabled { padding: 0 11px; line-height: 43px; color: #407d48; background: #eef9f0; }

.pager {
  display: flex;
  align-items: center;
  justify-content: flex-end;
  gap: 16px;
  margin-top: 15px;
}

/* Shadow cast by the dock that sits just below the window */
.dock-shadow {
  position: absolute;
  top: 100%;
  left: 24%;
  right: 27%;
  height: 80px;
  box-shadow: 0 0 80px rgb(0 0 0 / 30%);
}
```
